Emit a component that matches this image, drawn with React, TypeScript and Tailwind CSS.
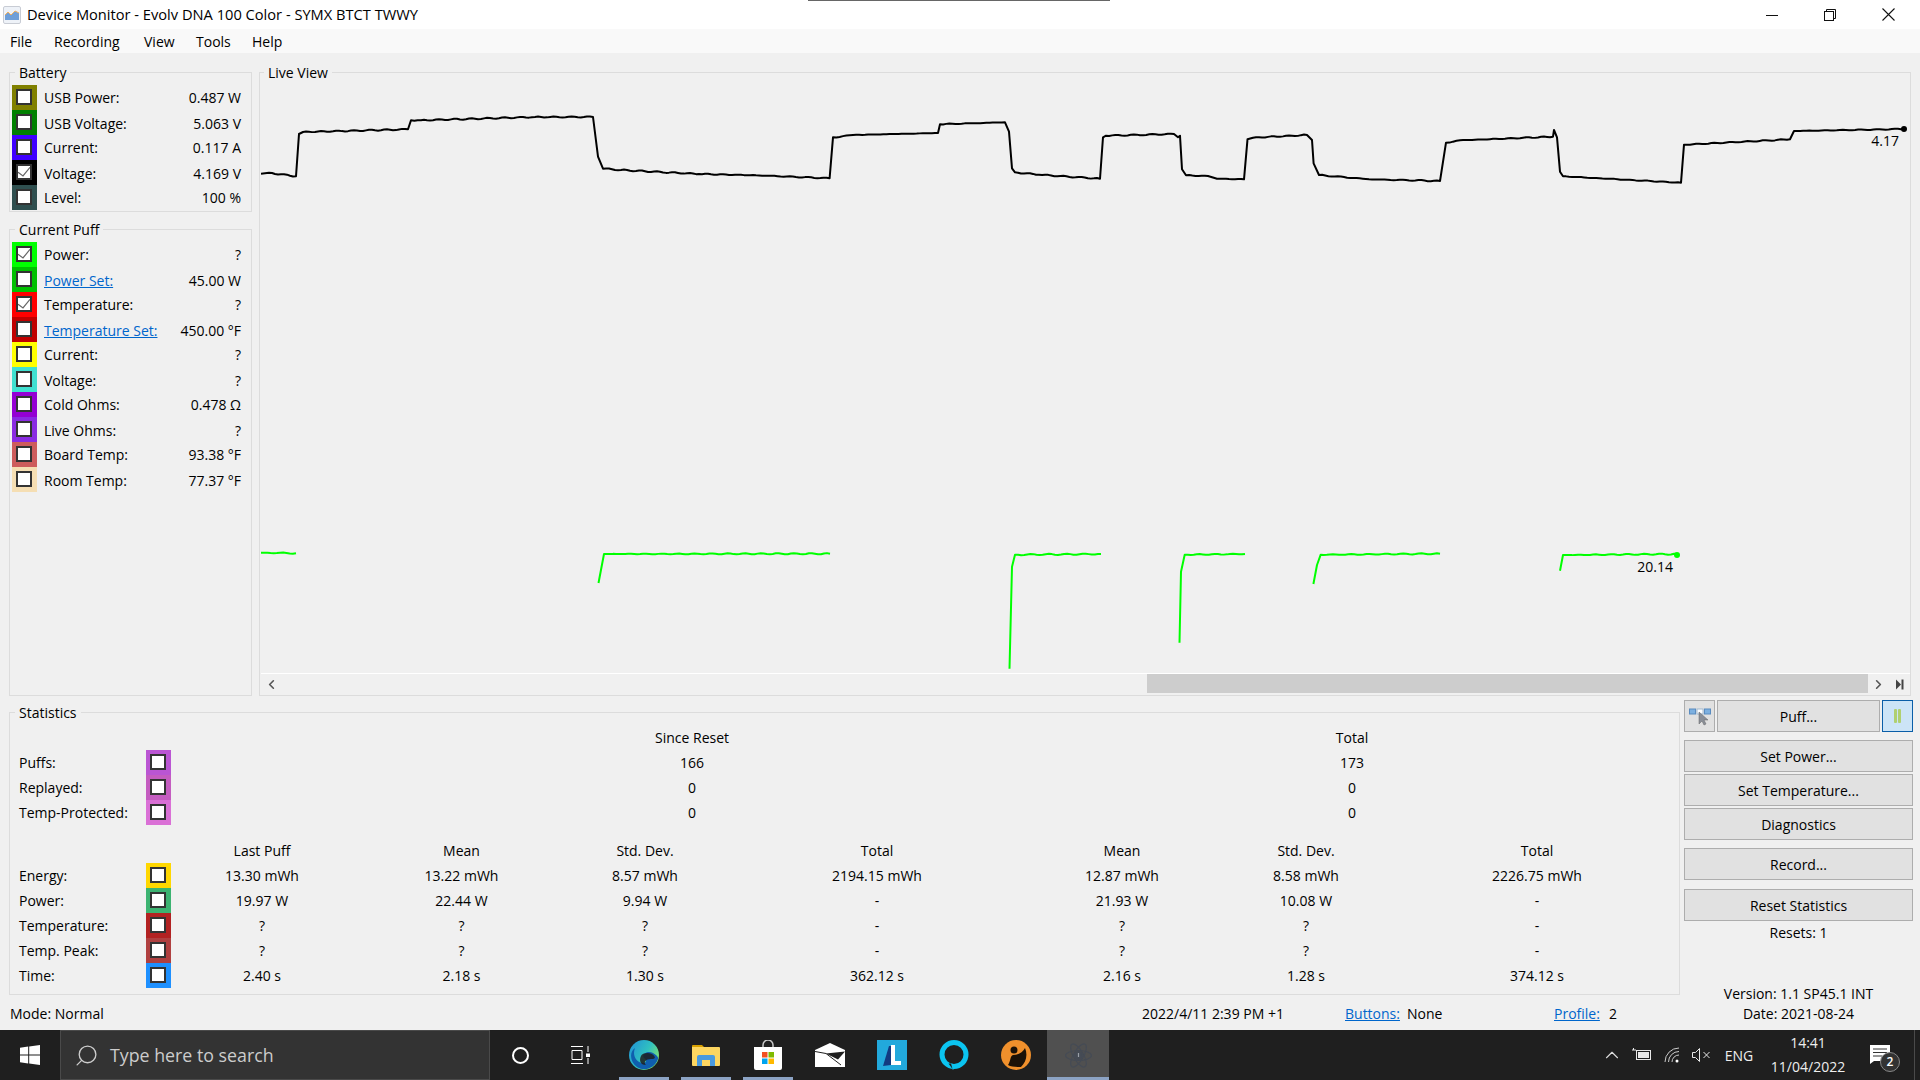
import React from 'react';
import { ChevronUp, ChevronLeft, ChevronRight, Search } from 'lucide-react';

type Point = [number, number];

// chart traces, in page pixels
const voltage: Point[] = [
  [261, 173.7], [269, 172.7], [296, 176.3], [299, 134], [303, 132], [408, 129.3], [411, 120.3], [421, 120.3],
  [535, 117], [593, 117], [598, 156.7], [603, 168.7], [621, 170], [699, 174], [756, 175.3], [829.6, 178.3],
  [833, 137.3], [853, 135], [938, 133], [940, 124.3], [1005, 122.3], [1009, 131.7], [1012, 168.3], [1015, 172.3],
  [1039, 174.7], [1100, 178.7], [1103, 137.3], [1106, 135.7], [1174, 134], [1178, 137.3], [1180, 135.7],
  [1182, 169.3], [1186, 175.3], [1208, 176], [1217, 178.7], [1244, 179.3], [1247.5, 139.3], [1253, 137.7],
  [1307, 135], [1312, 140], [1313.6, 163.3], [1319, 175], [1369, 179.3], [1440, 181], [1446, 142.7], [1460, 140.3],
  [1553, 136.7], [1554, 130], [1557, 137.3], [1560, 171.7], [1563, 176.3], [1681, 182.7], [1684, 144.7],
  [1790, 139.3], [1794, 131], [1904, 129],
];

const power: Point[][] = [
  [[261, 552.7], [296, 553.3]],
  [[598.5, 583], [604, 554], [830, 553.7]],
  [[1009.5, 668.7], [1012, 566.7], [1015, 554.7], [1101, 554]],
  [[1179.5, 642.7], [1181, 571.7], [1184.7, 554.7], [1245, 554]],
  [[1313.4, 584], [1317, 565], [1320.7, 554.7], [1440, 553.7]],
  [[1560, 570.7], [1563, 555], [1677, 554]],
];

// long flat runs get a little noise so they look like sampled data
const wobble = (pts: Point[]) => {
  const out: Point[] = [];
  pts.forEach((p, i) => {
    out.push(p);
    const next = pts[i + 1];
    if (!next) return;
    const dx = next[0] - p[0];
    if (dx < 10) return;
    const steps = Math.floor(dx / 3);
    for (let s = 1; s < steps; s++) {
      const x = p[0] + (dx * s) / steps;
      const y = p[1] + ((next[1] - p[1]) * s) / steps;
      out.push([x, y + Math.sin(x * 1.7) * 0.35 + Math.sin(x * 0.37) * 0.25]);
    }
  });
  return out.map((p) => p.join(',')).join(' ');
};

type RowData = { color: string; label: string; value: string; checked?: boolean; link?: boolean };

const batteryRows: RowData[] = [
  { color: 'bg-[#808000]', label: 'USB Power:', value: '0.487 W' },
  { color: 'bg-[#008000]', label: 'USB Voltage:', value: '5.063 V' },
  { color: 'bg-[#3f00ff]', label: 'Current:', value: '0.117 A' },
  { color: 'bg-black', label: 'Voltage:', value: '4.169 V', checked: true },
  { color: 'bg-[#2f4f4f]', label: 'Level:', value: '100 %' },
];

const puffRows: RowData[] = [
  { color: 'bg-[#00ff00]', label: 'Power:', value: '?', checked: true },
  { color: 'bg-[#00c000]', label: 'Power Set:', value: '45.00 W', link: true },
  { color: 'bg-[#ff0000]', label: 'Temperature:', value: '?', checked: true },
  { color: 'bg-[#c00000]', label: 'Temperature Set:', value: '450.00 °F', link: true },
  { color: 'bg-[#ffff00]', label: 'Current:', value: '?' },
  { color: 'bg-[#40e0d0]', label: 'Voltage:', value: '?' },
  { color: 'bg-[#9400d3]', label: 'Cold Ohms:', value: '0.478 Ω' },
  { color: 'bg-[#8a2be2]', label: 'Live Ohms:', value: '?' },
  { color: 'bg-[#cd5c5c]', label: 'Board Temp:', value: '93.38 °F' },
  { color: 'bg-[#f5deb3]', label: 'Room Temp:', value: '77.37 °F' },
];

const counters = [
  { color: 'bg-[#ba55d3]', label: 'Puffs:', since: '166', total: '173' },
  { color: 'bg-[#c45cc0]', label: 'Replayed:', since: '0', total: '0' },
  { color: 'bg-[#da70d6]', label: 'Temp-Protected:', since: '0', total: '0' },
];

const statHeads = ['Last Puff', 'Mean', 'Std. Dev.', 'Total', 'Mean', 'Std. Dev.', 'Total'];

const stats = [
  { color: 'bg-[#ffd700]', label: 'Energy:', values: ['13.30 mWh', '13.22 mWh', '8.57 mWh', '2194.15 mWh', '12.87 mWh', '8.58 mWh', '2226.75 mWh'] },
  { color: 'bg-[#3cb371]', label: 'Power:', values: ['19.97 W', '22.44 W', '9.94 W', '-', '21.93 W', '10.08 W', '-'] },
  { color: 'bg-[#b22222]', label: 'Temperature:', values: ['?', '?', '?', '-', '?', '?', '-'] },
  { color: 'bg-[#b04040]', label: 'Temp. Peak:', values: ['?', '?', '?', '-', '?', '?', '-'] },
  { color: 'bg-[#1e90ff]', label: 'Time:', values: ['2.40 s', '2.18 s', '1.30 s', '362.12 s', '2.16 s', '1.28 s', '374.12 s'] },
];

const Swatch = ({ color, checked }: { color: string; checked?: boolean }) => (
  <div className={`h-[25px] w-[25px] shrink-0 p-[4px] ${color}`}>
    <div className="flex h-[16px] w-[16px] items-center justify-center border-2 border-[#333] bg-white">
      {checked && (
        <svg width="12" height="12" viewBox="0 0 12 12" fill="none" stroke="#666" strokeWidth="1.2">
          <path d="M0 6.3 5 10 12 1.3" />
        </svg>
      )}
    </div>
  </div>
);

const ValueRow = ({ row }: { row: RowData }) => (
  <div className="flex h-[25px] items-center even:[&>span]:translate-y-[1px]">
    <Swatch color={row.color} checked={row.checked} />
    <span className={`ml-[7px] ${row.link ? 'text-[#0066cc] underline' : ''}`}>{row.label}</span>
    <span className="ml-auto">{row.value}</span>
  </div>
);

const Group = ({ title, className, children }: { title: string; className: string; children: React.ReactNode }) => (
  <fieldset className={`border border-[#dcdcdc] ${className}`}>
    <legend className="ml-[3px] h-[20px] px-[4px] leading-[21px]">{title}</legend>
    {children}
  </fieldset>
);

const Btn = ({ label, className }: { label: string; className: string }) => (
  <button className={`flex h-[32px] items-center justify-center border border-[#adadad] bg-[#e1e1e1] ${className}`}>{label}</button>
);

const TaskIcon = ({ children, open, active }: { children: React.ReactNode; open?: boolean; active?: boolean }) => (
  <div className={`relative flex h-[50px] w-[62px] items-center justify-center ${active ? 'bg-[#505050]' : ''}`}>
    {children}
    {open && <div className={`absolute bottom-0 h-[3px] bg-[#8ca3c4] ${active ? 'inset-x-0' : 'inset-x-[6px]'}`} />}
  </div>
);

const Scroller = () => (
  <div className="flex h-[21px] border-t border-white text-[#555]">
    <div className="flex w-[21px] items-center justify-center">
      <ChevronLeft size={15} strokeWidth={2.6} />
    </div>
    <div className="ml-[865px] h-[19px] w-[721px] bg-[#cdcdcd]" />
    <div className="flex w-[20px] items-center justify-center">
      <ChevronRight size={15} strokeWidth={2.6} />
    </div>
    <div className="flex items-center pl-[8px]">
      <svg width="8" height="11" viewBox="0 0 8 11" fill="#444">
        <path d="M0 .5 5 5.5 0 10.5Z" />
        <rect x="5.5" y="0.5" width="2" height="10" />
      </svg>
    </div>
  </div>
);

export default function App() {
  return (
    <div className="flex h-[1080px] w-[1920px] flex-col overflow-hidden bg-[#f0f0f0] font-['Open_Sans',sans-serif] text-[14px] text-black">
      {/* title bar */}
      <div className="relative flex h-[29px] items-center bg-white">
        <div className="absolute left-[808px] top-0 h-[1px] w-[302px] bg-[#666]" />
        <svg className="ml-[3px]" width="18" height="18" viewBox="0 0 18 18">
          <rect x="0.5" y="0.5" width="17" height="17" rx="1.5" fill="#eef2f8" stroke="#c8ccd4" />
          <path d="M2 14V9l3-3 3 3 4-4 4 2v7Z" fill="#6f9fd8" />
          <path d="M2 9l3-3 3 3 4-4 4 2" fill="none" stroke="#f0b060" />
        </svg>
        <span className="ml-[6px] text-[14.65px]">Device Monitor - Evolv DNA 100 Color - SYMX BTCT TWWY</span>
        <div className="ml-auto mr-[25px] flex items-center gap-[46px]">
          <svg width="12" height="12" viewBox="0 0 12 12" stroke="#111">
            <path d="M0 6.5H12" />
          </svg>
          <svg width="12" height="12" viewBox="0 0 12 12" fill="none" stroke="#111">
            <rect x="0.5" y="2.5" width="9" height="9" />
            <path d="M2.5 2.5V.5h9v9H9.5" />
          </svg>
          <svg width="13" height="13" viewBox="0 0 13 13" stroke="#111" strokeWidth="1.1">
            <path d="M.5 .5 12.5 12.5M12.5 .5 .5 12.5" />
          </svg>
        </div>
      </div>

      {/* menu */}
      <div className="flex h-[24px] items-center bg-[#f9f9f9] pl-[10px]">
        <span className="w-[44px]">File</span>
        <span className="w-[90px]">Recording</span>
        <span className="w-[52px]">View</span>
        <span className="w-[56px]">Tools</span>
        <span>Help</span>
      </div>

      <div className="flex flex-1 flex-col pl-[9px] pr-[7px] pt-[9px]">
        <div className="flex h-[634px] gap-[7px] pr-[2px]">
          <div className="flex w-[243px] flex-col">
            <Group title="Battery" className="h-[150px] pl-[2px] pr-[10px]">
              <div className="pt-[3px]">
                {batteryRows.map((r) => <ValueRow key={r.label} row={r} />)}
              </div>
            </Group>
            <Group title="Current Puff" className="mt-[7px] flex-1 pl-[2px] pr-[10px]">
              <div className="pt-[3px]">
                {puffRows.map((r) => <ValueRow key={r.label} row={r} />)}
              </div>
            </Group>
          </div>

          <Group title="Live View" className="flex-1 pl-[1px]">
            <svg className="block h-[591px] w-full" viewBox="261 82 1649 591" fill="none">
              <polyline points={wobble(voltage)} stroke="#000" strokeWidth="2" strokeLinejoin="round" />
              <circle cx="1904" cy="129" r="3" fill="#000" />
              <text x="1899" y="146" textAnchor="end" fill="#000" fontSize="14">4.17</text>
              {power.map((seg, i) => (
                <polyline key={i} points={wobble(seg)} stroke="#00ff00" strokeWidth="2" strokeLinejoin="round" />
              ))}
              <circle cx="1677" cy="555" r="3" fill="#00ff00" />
              <text x="1673" y="572" textAnchor="end" fill="#000" fontSize="14">20.14</text>
            </svg>
            <Scroller />
          </Group>
        </div>

        <div className="mt-[6px] flex">
          <div className="w-[1671px]">
            <Group title="Statistics" className="h-[293px] pl-[2px]">
              <div className="grid grid-cols-[127px_25px_1042px_278px] pl-[7px] pt-[3px] text-center">
                <div className="col-start-3 flex h-[25px] items-center justify-center">Since Reset</div>
                <div className="flex h-[25px] items-center justify-center">Total</div>
                {counters.map((c) => (
                  <React.Fragment key={c.label}>
                    <div className="flex h-[25px] items-center text-left">{c.label}</div>
                    <Swatch color={c.color} />
                    <div className="flex h-[25px] items-center justify-center">{c.since}</div>
                    <div className="flex h-[25px] items-center justify-center">{c.total}</div>
                  </React.Fragment>
                ))}
              </div>
              <div className="mt-[13px] grid grid-cols-[127px_25px_182px_217px_150px_314px_176px_192px_270px] pl-[7px] text-center">
                {statHeads.map((h, i) => (
                  <div key={i} className={`flex h-[25px] items-center justify-center ${i === 0 ? 'col-start-3' : ''}`}>{h}</div>
                ))}
                {stats.map((s) => (
                  <React.Fragment key={s.label}>
                    <div className="flex h-[25px] items-center text-left">{s.label}</div>
                    <Swatch color={s.color} />
                    {s.values.map((v, i) => (
                      <div key={i} className="flex h-[25px] items-center justify-center">{v}</div>
                    ))}
                  </React.Fragment>
                ))}
              </div>
            </Group>
            <div className="flex h-[35px] items-center pl-[1px] pt-[2px]">
              <span className="w-[1132px]">Mode: Normal</span>
              <span className="w-[203px]">2022/4/11 2:39 PM +1</span>
              <span className="w-[62px] text-[#0066cc] underline">Buttons:</span>
              <span className="w-[147px]">None</span>
              <span className="w-[55px] text-[#0066cc] underline">Profile:</span>
              <span>2</span>
            </div>
          </div>

          <div className="-mt-[2px] ml-[4px] w-[229px]">
            <div className="flex gap-[2px]">
              <button className="flex h-[32px] w-[31px] items-center justify-center border border-[#adadad] bg-[#e1e1e1]">
                <svg width="22" height="20" viewBox="0 0 22 20">
                  <rect x="0.5" y="3" width="6" height="5" fill="#7db0e0" stroke="#5a8cc0" />
                  <rect x="8" y="3" width="6" height="5" fill="#fff" stroke="#a0b8d0" />
                  <rect x="15.5" y="3" width="6" height="5" fill="#7db0e0" stroke="#5a8cc0" />
                  <path d="M10 6v12l3-3 2 4 2-1-2-4h4Z" fill="#8a8f98" stroke="#666" strokeWidth="0.5" />
                </svg>
              </button>
              <Btn label="Puff..." className="w-[163px]" />
              <button className="flex h-[32px] w-[31px] items-center justify-center gap-[1px] border border-[#0a5ea8] bg-[#cce4f7]">
                <div className="h-[14px] w-[3px] rounded-[1px] bg-[#b0d070]" />
                <div className="h-[14px] w-[3px] rounded-[1px] bg-[#b0d070]" />
              </button>
            </div>
            <Btn label="Set Power..." className="mt-[8px] w-full" />
            <Btn label="Set Temperature..." className="mt-[2px] w-full" />
            <Btn label="Diagnostics" className="mt-[2px] w-full" />
            <Btn label="Record..." className="mt-[8px] w-full" />
            <Btn label="Reset Statistics" className="mt-[9px] w-full" />
            <div className="flex h-[23px] items-center justify-center">Resets: 1</div>
            <div className="mt-[39px] flex h-[20px] items-center justify-center">Version: 1.1 SP45.1 INT</div>
            <div className="flex h-[20px] items-center justify-center">Date: 2021-08-24</div>
          </div>
        </div>
      </div>

      {/* taskbar */}
      <div className="flex h-[50px] items-center bg-[#1f1f1f] text-white">
        <div className="flex w-[60px] justify-center">
          <svg width="20" height="20" viewBox="0 0 20 20" fill="#fff">
            <path d="M0 2.8 8.2 1.6V9.5H0ZM9.2 1.5 20 0V9.5H9.2ZM0 10.5H8.2V18.4L0 17.2ZM9.2 10.5H20V20L9.2 18.5Z" />
          </svg>
        </div>
        <div className="flex h-full w-[430px] items-center border border-[#4a4a4a] bg-[#333] pl-[13px] text-[#ccc]">
          <Search size={25} strokeWidth={1.3} className="-scale-x-100" />
          <span className="ml-[11px] text-[17.8px]">Type here to search</span>
        </div>
        <div className="flex h-full w-[60px] items-center justify-center">
          <div className="h-[17px] w-[17px] rounded-full border-2 border-white" />
        </div>
        <div className="flex h-full w-[60px] items-center justify-center">
          <svg width="20" height="20" viewBox="0 0 20 20" fill="none" stroke="#fff">
            <path d="M1 1.5H13M1 18.5H13M2 5.5H12V14.5H2ZM18 1V7M18 13V19" />
            <rect x="16" y="8.5" width="4" height="3.5" fill="#fff" stroke="none" />
          </svg>
        </div>
        <div className="ml-[3px] flex">
          <TaskIcon open>
            <svg width="30" height="30" viewBox="0 0 30 30">
              <defs>
                <linearGradient id="edgeA" x1="0" y1="0" x2="1" y2="0.6">
                  <stop offset="0" stopColor="#1f8fd8" />
                  <stop offset="0.6" stopColor="#30c0c0" />
                  <stop offset="1" stopColor="#7de070" />
                </linearGradient>
              </defs>
              <circle cx="15" cy="15" r="15" fill="url(#edgeA)" />
              <path d="M29 19C26 28 16 32 8 27 1 22 0 12 6 8 3 15 7 23 14 23 19 23 17 19 15 18 12 14 19 10 24 13 27 15 30 17 29 19Z" fill="#0f5eae" />
              <path d="M12 16C13 13 19 12 23 14 27 17 27 19 22 19 17 19 14 22 17 25 11 25 10 20 12 16Z" fill="#1f1f1f" opacity="0.85" />
            </svg>
          </TaskIcon>
          <TaskIcon open>
            <svg width="28" height="24" viewBox="0 0 28 24">
              <path d="M0 3a1 1 0 0 1 1-1h9l2 2H0Z" fill="#d8a000" />
              <path d="M0 4H27a1 1 0 0 1 1 1V22a1 1 0 0 1-1 1H1a1 1 0 0 1-1-1Z" fill="#fdd661" />
              <path d="M5 23V14a2 2 0 0 1 2-2H21a2 2 0 0 1 2 2V23H18V17H10V23Z" fill="#4a9adf" />
            </svg>
          </TaskIcon>
          <TaskIcon open>
            <svg width="28" height="30" viewBox="0 0 28 30">
              <path d="M9 8V5a5 5 0 0 1 10 0V8" fill="none" stroke="#c8c8c8" strokeWidth="1.5" />
              <path d="M0 7H28V28a2 2 0 0 1-2 2H2a2 2 0 0 1-2-2Z" fill="#fff" />
              <rect x="8" y="12" width="5.5" height="5.5" fill="#f25022" />
              <rect x="14.5" y="12" width="5.5" height="5.5" fill="#7fba00" />
              <rect x="8" y="18.5" width="5.5" height="5.5" fill="#00a4ef" />
              <rect x="14.5" y="18.5" width="5.5" height="5.5" fill="#ffb900" />
            </svg>
          </TaskIcon>
          <TaskIcon>
            <svg width="30" height="24" viewBox="0 0 30 24">
              <path d="M0 7 15 0 30 7V24H0Z" fill="#fff" />
              <path d="M30 8.5 11 10.5 23 16.5Z" fill="#1f1f1f" />
              <path d="M0 8.5 11 10.5 26 22" fill="none" stroke="#1f1f1f" strokeWidth="1" />
            </svg>
          </TaskIcon>
          <TaskIcon>
            <svg width="30" height="30" viewBox="0 0 30 30">
              <rect width="30" height="30" fill="#22a9dc" />
              <path d="M6 26 12 6H15L14 25Z" fill="#123a80" />
              <path d="M14 5H18V21H24V25H14Z" fill="#fff" />
            </svg>
          </TaskIcon>
          <TaskIcon>
            <svg width="30" height="30" viewBox="0 0 30 30">
              <circle cx="15" cy="14.5" r="12" fill="none" stroke="#0bc4f0" strokeWidth="5" />
              <path d="M10 24 14 30 18 24Z" fill="#0bc4f0" />
              <path d="M9.5 23.5 13.5 29 12 23.5Z" fill="#1f1f1f" />
            </svg>
          </TaskIcon>
          <TaskIcon>
            <svg width="30" height="30" viewBox="0 0 30 30">
              <ellipse cx="15" cy="15" rx="15" ry="15" fill="#f0902c" />
              <path d="M7 25C10 20 9 16 12 15 18 15 22 12 24 8 27 15 25 22 20 27 15 27 10 27 7 25Z" fill="#1c1208" />
              <circle cx="13" cy="10" r="3.5" fill="#1c1208" />
            </svg>
          </TaskIcon>
          <TaskIcon open active>
            <svg width="27" height="27" viewBox="0 0 27 27" fill="none" stroke="#454b55" strokeWidth="1.2">
              <ellipse cx="13.5" cy="13.5" rx="13" ry="5" />
              <ellipse cx="13.5" cy="13.5" rx="13" ry="5" transform="rotate(60 13.5 13.5)" />
              <ellipse cx="13.5" cy="13.5" rx="13" ry="5" transform="rotate(120 13.5 13.5)" />
              <circle cx="13.5" cy="13.5" r="4" fill="#454b55" />
              <path d="M13.5 11V15" stroke="#9aa0a8" />
            </svg>
          </TaskIcon>
        </div>

        {/* tray */}
        <ChevronUp size={22} strokeWidth={1.2} className="ml-[492px] text-[#ddd]" />
        <svg className="ml-[9px]" width="20" height="14" viewBox="0 0 20 14" fill="none" stroke="#e8e8e8">
          <rect x="4.5" y="2.5" width="14" height="9" />
          <rect x="6" y="4" width="11" height="6" fill="#e8e8e8" stroke="none" />
          <path d="M0 2H4M1.5 0V2" />
        </svg>
        <svg className="ml-[12px]" width="16" height="16" viewBox="0 0 16 16" fill="none" stroke="#ccc" strokeWidth="1">
          <path d="M1 15A14 14 0 0 1 15 1M4.5 15A10.5 10.5 0 0 1 15 4.5M8 15A7 7 0 0 1 15 8" />
          <circle cx="13" cy="14" r="1.5" fill="#fff" stroke="none" />
        </svg>
        <svg className="ml-[12px]" width="19" height="14" viewBox="0 0 19 14" fill="none" stroke="#e8e8e8">
          <path d="M.5 4.5H3.5L7.5.5V13.5L3.5 9.5H.5ZM11.5 4 17.5 10M17.5 4 11.5 10" />
        </svg>
        <span className="ml-[11px] w-[34px] text-center text-[14px] text-[#eee]">ENG</span>
        <div className="ml-[13px] flex w-[78px] flex-col items-center text-[14px] leading-[24px] text-[#eee]">
          <span>14:41</span>
          <span>11/04/2022</span>
        </div>
        <div className="relative ml-[23px]">
          <svg width="20" height="20" viewBox="0 0 20 20">
            <path d="M0 0H20V16H4L0 19Z" fill="#fff" />
            <path d="M3 4H17M3 7.5H17M3 11H12" stroke="#333" strokeWidth="1" />
          </svg>
          <div className="absolute -bottom-[7px] -right-[10px] flex h-[20px] w-[20px] items-center justify-center rounded-full border border-[#888] bg-[#333] text-[12px] font-semibold">2</div>
        </div>
        <div className="ml-auto h-full w-[6px] border-l border-[#4a4a4a]" />
      </div>
    </div>
  );
}
